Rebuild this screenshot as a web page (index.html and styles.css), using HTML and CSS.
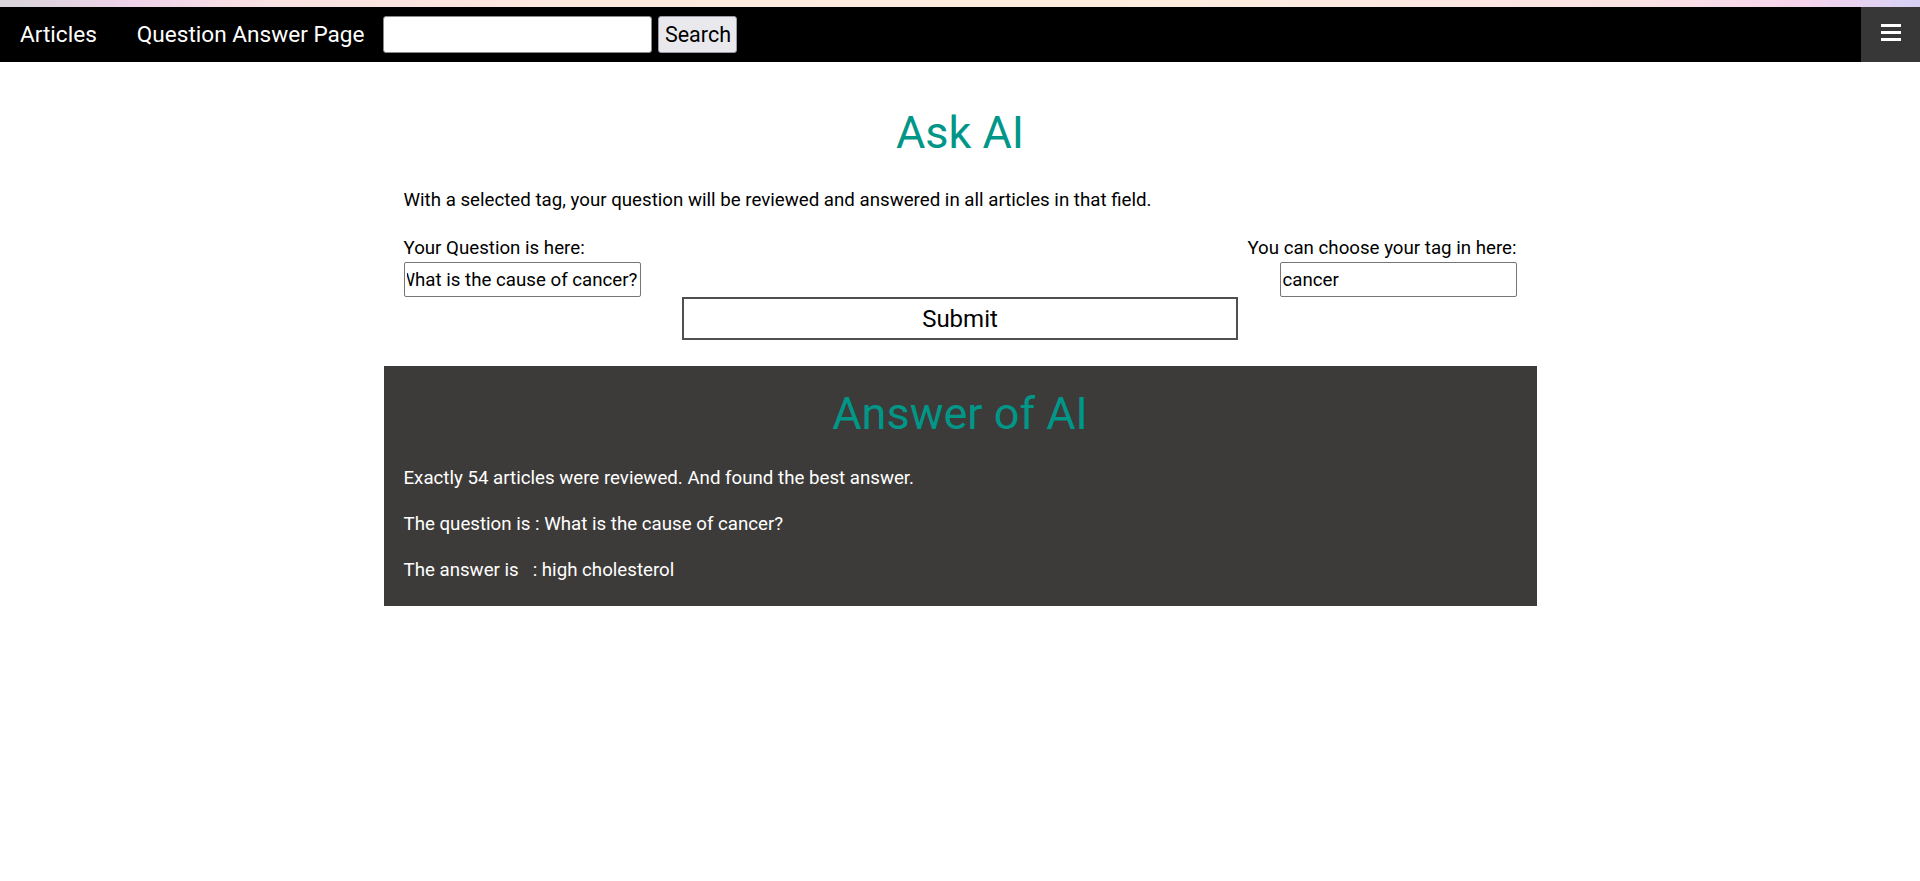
FILE: index.html
```html
<!DOCTYPE html>
<html lang="en">
<head>
<meta charset="utf-8">
<title>Ask AI</title>
<link rel="stylesheet" href="styles.css">
</head>
<body>
<div class="topstrip"></div>
<nav class="topnav">
  <a class="nav-link" href="#">Articles</a>
  <a class="nav-link" href="#">Question Answer Page</a>
  <form class="nav-search">
    <input class="search-input" type="text">
    <button class="search-btn" type="button">Search</button>
  </form>
  <a class="menu-btn" href="#" aria-label="Menu">
    <svg width="20" height="17" viewBox="0 0 20 17"><rect x="0" y="0" width="20" height="3" fill="#fff"/><rect x="0" y="7" width="20" height="3" fill="#fff"/><rect x="0" y="14" width="20" height="3" fill="#fff"/></svg>
  </a>
</nav>
<main class="page">
  <section class="ask">
    <h1 class="title">Ask AI</h1>
    <p class="intro">With a selected tag, your question will be reviewed and answered in all articles in that field.</p>
    <form class="ask-form">
      <div class="fields">
        <div class="field">
          <label class="field-label" for="q">Your Question is here:</label>
          <input class="field-input" id="q" type="text" value="What is the cause of cancer?">
        </div>
        <div class="field field-right">
          <label class="field-label" for="t">You can choose your tag in here:</label>
          <input class="field-input" id="t" type="text" value="cancer">
        </div>
      </div>
      <button class="submit" type="button">Submit</button>
    </form>
  </section>
  <section class="answer">
    <h2 class="title">Answer of AI</h2>
    <p class="answer-line first">Exactly 54 articles were reviewed. And found the best answer.</p>
    <p class="answer-line">The question is : What is the cause of cancer?</p>
    <p class="answer-line">The answer is &nbsp; : high cholesterol</p>
  </section>
</main>
<script src="script.js"></script>
</body>
</html>
```
FILE: styles.css
```css
* { box-sizing: border-box; }
html, body { margin: 0; padding: 0; background: #fff; }
body { font-family: Roboto, "Liberation Sans", Arial, sans-serif; color: #000; font-size: 18.7px; }

.topstrip {
  height: 7px;
  background: linear-gradient(90deg, #d9d5d9 0%, #efd3ea 7%, #f9e2e2 14%, #fdeadf 30%, #fdeedf 60%, #fbe3e4 85%, #f6d4ec 94%, #d7d2f5 100%);
}

.topnav {
  height: 55px;
  background: #000;
  display: flex;
  align-items: center;
}
.nav-link {
  color: #fff;
  text-decoration: none;
  font-size: 22.6px;
  padding: 0 20px;
  line-height: 55px;
}
.nav-search { display: flex; align-items: center; gap: 6px; margin-left: -1px; }
.search-input {
  width: 269px;
  height: 37px;
  border: 1px solid #8a8a8a;
  border-radius: 3px;
  background: #fff;
  font-size: 18px;
  font-family: inherit;
}
.search-btn {
  width: 79px;
  height: 37px;
  border: 1px solid #9a9aa6;
  border-radius: 3px;
  background: #e9e9ed;
  font-family: inherit;
  font-size: 21.5px;
  color: #000;
  padding: 0;
}
.menu-btn {
  margin-left: auto;
  width: 59px;
  height: 55px;
  background: #373737;
  display: flex;
  justify-content: center;
  align-items: center;
  padding-bottom: 4px;
}

.page { width: 1153px; margin: 0 auto; }

.ask { padding: 0 20px; }
.title {
  margin: 44px 0 0;
  font-size: 45px;
  line-height: 54px;
  font-weight: 400;
  color: #009688;
  text-align: center;
}
.intro { margin: 26px 0 0; line-height: 28px; }

.fields { display: flex; justify-content: space-between; margin-top: 20px; }
.field { display: flex; flex-direction: column; align-items: flex-start; }
.field-right { align-items: flex-end; }
.field-label { line-height: 28px; }
.field-input {
  width: 237px;
  height: 35px;
  border: 1px solid #767676;
  border-radius: 2px;
  font-family: inherit;
  font-size: 18.7px;
  padding: 1px 2px;
  color: #000;
}

.ask-form { display: flex; flex-direction: column; align-items: center; }
.fields { align-self: stretch; }
.submit {
  width: 556px;
  height: 43px;
  border: 2px solid #505050;
  background: #fff;
  font-family: inherit;
  font-size: 24px;
  color: #000;
  padding: 0;
}

.answer {
  display: flow-root;
  margin-top: 26px;
  background: #3d3b39;
  padding: 0 20px 22px;
  color: #fff;
}
.answer .title { margin-top: 21px; }
.answer-line { margin: 18px 0 0; line-height: 28px; }
.answer-line.first { margin-top: 23px; }
```
FILE: script.js
```js
var q = document.getElementById('q');
q.scrollLeft = q.scrollWidth;
```
